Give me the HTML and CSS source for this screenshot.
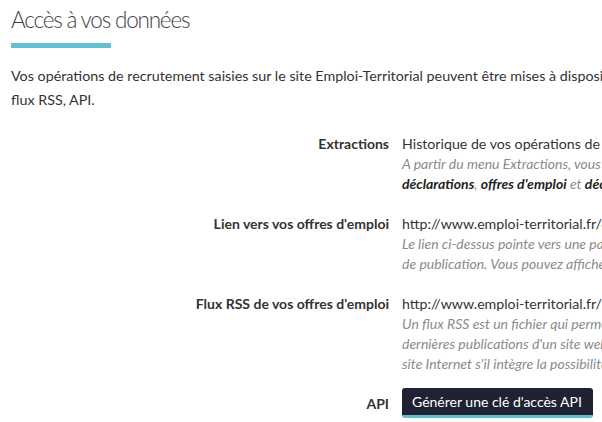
FILE: index.html
```html
<!DOCTYPE html>
<html lang="fr">

<head>
  <meta charset="UTF-8">
  <meta name="viewport" content="width=device-width, initial-scale=1.0">
  <title>Accès à vos données</title>
  <link rel="stylesheet" href="styles.css">
</head>

<body>
  <div class="page">
    <h1>Accès à vos données</h1>
    <div class="bar"></div>

    <p class="intro">Vos opérations de recrutement saisies sur le site Emploi-Territorial peuvent être mises à disposition sous la forme d'extractions,<br>flux RSS, API.</p>

    <div class="fields">
      <div class="label">Extractions</div>
      <div class="value">
        <div>Historique de vos opérations de recrutement</div>
        <div class="help">A partir du menu Extractions, vous pouvez télécharger l'historique de vos<br>
          <b>déclarations</b>, <b>offres d'emploi</b> et <b>déclarations de nomination</b>.</div>
      </div>

      <div class="label">Lien vers vos offres d'emploi</div>
      <div class="value">
        <div>http://www.emploi-territorial.fr/offres/collectivite/123456</div>
        <div class="help">Le lien ci-dessus pointe vers une page listant vos offres d'emploi en cours<br>
          de publication. Vous pouvez afficher ce lien sur votre site Internet.</div>
      </div>

      <div class="label">Flux RSS de vos offres d'emploi</div>
      <div class="value">
        <div>http://www.emploi-territorial.fr/rss/collectivite/123456</div>
        <div class="help">Un flux RSS est un fichier qui permet de suivre automatiquement les<br>
          dernières publications d'un site web. Vous pouvez l'intégrer à votre<br>
          site Internet s'il intègre la possibilité de lire des flux RSS.</div>
      </div>

      <div class="label">API</div>
      <div class="value">
        <button class="btn">Générer une clé d'accès API</button>
        <div class="help">Une API vous permet de récupérer vos données automatiquement.</div>
      </div>
    </div>
  </div>
</body>

</html>
```

FILE: styles.css
```css
* {
  margin: 0;
  padding: 0;
  box-sizing: border-box;
}

html,
body {
  overflow: hidden;
  background: #fff;
}

body {
  font-family: Lato, "Open Sans", sans-serif;
  font-size: 14px;
  color: #333;
}

.page {
  width: 1000px;
  padding: 6px 11px 8px;
}

h1 {
  font-family: "Lato Light", Lato, sans-serif;
  font-weight: 300;
  font-size: 22.5px;
  letter-spacing: -1.2px;
  line-height: 28px;
  color: #3e3e48;
}

.bar {
  width: 100px;
  height: 5px;
  background: #63c0d1;
  margin-top: 9px;
}

.intro {
  margin-top: 16px;
  font-size: 14.3px;
  line-height: 24px;
  white-space: nowrap;
}

.fields {
  display: grid;
  grid-template-columns: 378px 1fr;
  column-gap: 13px;
  row-gap: 20px;
  margin-top: 22px;
  line-height: 20px;
}

.label {
  text-align: right;
  font-weight: bold;
}

.value {
  white-space: nowrap;
  font-size: 14.2px;
}

.help {
  font-style: italic;
  color: #8a8a8a;
  font-size: 14px;
}

.help b {
  color: #222;
}

.btn {
  display: block;
  font-family: inherit;
  font-size: 14px;
  color: #fff;
  background: #1f2233;
  border: none;
  border-bottom: 3px solid #63c0d1;
  border-radius: 3px;
  padding: 4px 11px 3px 10px;
  line-height: 20px;
  margin-top: -6px;
  cursor: pointer;
}
```
